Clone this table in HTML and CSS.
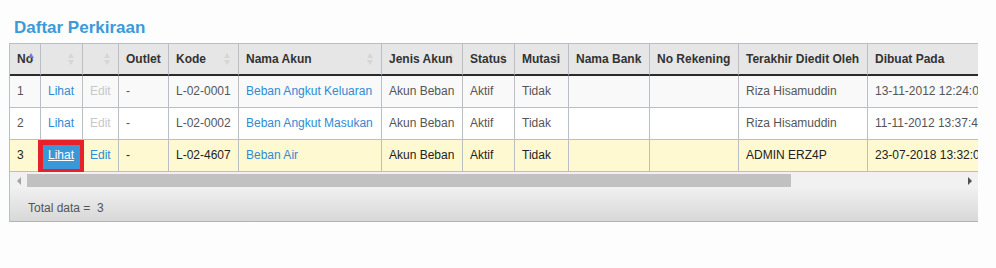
FILE: index.html
```html
<!DOCTYPE html>
<html lang="id">
<head>
<meta charset="utf-8">
<title>Daftar Perkiraan</title>
<link rel="stylesheet" href="styles.css">
</head>
<body>
<div class="page">
  <h2 class="title">Daftar Perkiraan</h2>
  <div class="grid">
    <div class="clip">
      <table class="tbl">
        <colgroup>
          <col class="c1"><col class="c2"><col class="c3"><col class="c4"><col class="c5"><col class="c6"><col class="c7"><col class="c8"><col class="c9"><col class="c10"><col class="c11"><col class="c12"><col class="c13">
        </colgroup>
        <thead>
          <tr>
            <th class="sort asc"><span class="t">No</span></th>
            <th class="sort"></th>
            <th class="sort"></th>
            <th class="sort"><span class="t">Outlet</span></th>
            <th class="sort"><span class="t">Kode</span></th>
            <th class="sort"><span class="t">Nama Akun</span></th>
            <th class="sort"><span class="t">Jenis Akun</span></th>
            <th class="sort"><span class="t">Status</span></th>
            <th class="sort"><span class="t">Mutasi</span></th>
            <th class="sort"><span class="t">Nama Bank</span></th>
            <th class="sort"><span class="t">No Rekening</span></th>
            <th><span class="t">Terakhir Diedit Oleh</span></th>
            <th><span class="t">Dibuat Pada</span></th>
          </tr>
        </thead>
        <tbody>
          <tr class="odd">
            <td>1</td>
            <td><a class="lnk">Lihat</a></td>
            <td><span class="dis">Edit</span></td>
            <td>-</td>
            <td>L-02-0001</td>
            <td><a class="lnk">Beban Angkut Keluaran</a></td>
            <td>Akun Beban</td>
            <td>Aktif</td>
            <td>Tidak</td>
            <td></td>
            <td></td>
            <td>Riza Hisamuddin</td>
            <td>13-11-2012 12:24:05</td>
          </tr>
          <tr class="even">
            <td>2</td>
            <td><a class="lnk">Lihat</a></td>
            <td><span class="dis">Edit</span></td>
            <td>-</td>
            <td>L-02-0002</td>
            <td><a class="lnk">Beban Angkut Masukan</a></td>
            <td>Akun Beban</td>
            <td>Aktif</td>
            <td>Tidak</td>
            <td></td>
            <td></td>
            <td>Riza Hisamuddin</td>
            <td>11-11-2012 13:37:41</td>
          </tr>
          <tr class="sel">
            <td>3</td>
            <td class="active"><a class="lnk on">Lihat</a><span class="mark"></span></td>
            <td><a class="lnk">Edit</a></td>
            <td>-</td>
            <td>L-02-4607</td>
            <td><a class="lnk">Beban Air</a></td>
            <td>Akun Beban</td>
            <td>Aktif</td>
            <td>Tidak</td>
            <td></td>
            <td></td>
            <td>ADMIN ERZ4P</td>
            <td>23-07-2018 13:32:09</td>
          </tr>
        </tbody>
      </table>
    </div>
    <div class="hscroll">
      <div class="btn left"><span class="arr-l"></span></div>
      <div class="track"><div class="thumb"></div></div>
      <div class="btn right"><span class="arr-r"></span></div>
    </div>
    <div class="foot">Total data =&nbsp; 3</div>
  </div>
</div>
</body>
</html>
```
FILE: styles.css
```css
html, body {
  margin: 0;
  padding: 0;
  background: #fdfdfd;
}
body {
  font-family: "Liberation Sans", Arial, sans-serif;
  font-size: 12px;
  color: #555;
}
.page {
  padding: 18px 18px 0 9px;
  width: 969px;
}
.title {
  margin: 0 0 5px 5px;
  font-size: 17px;
  line-height: 20px;
  font-weight: bold;
  color: #3b9ad9;
}
.grid {
  width: 968px;
  border-left: 1px solid #b9bfc5;
}
.clip {
  overflow: hidden;
  width: 968px;
}
.tbl {
  border-collapse: separate;
  border-spacing: 0;
  table-layout: fixed;
  width: 1000px;
}
.c1 { width: 30px; }
.c2 { width: 42px; }
.c3 { width: 36px; }
.c4 { width: 50px; }
.c5 { width: 70px; }
.c6 { width: 143px; }
.c7 { width: 81px; }
.c8 { width: 52px; }
.c9 { width: 54px; }
.c10 { width: 81px; }
.c11 { width: 89px; }
.c12 { width: 129px; }
.c13 { width: 143px; }
.tbl th, .tbl td {
  box-sizing: border-box;
  padding: 0 6px 0 7px;
  text-align: left;
  white-space: nowrap;
  overflow: hidden;
  border-left: 1px solid #b9bfc5;
  line-height: 15px;
}
.tbl th:first-child, .tbl td:first-child {
  border-left: none;
}
.tbl th {
  position: relative;
  height: 33px;
  background: #e6e6e6;
  color: #333;
  font-weight: bold;
  border-top: 1px solid #b9bfc5;
  border-bottom: 2px solid #2b2b2b;
  padding-top: 1px;
}
.t {
  position: relative;
  z-index: 1;
}
.tbl td {
  height: 32px;
  border-bottom: 1px solid #b9bfc5;
}
.sort::before, .sort::after {
  content: "";
  position: absolute;
  right: 8px;
  width: 0;
  height: 0;
  border-left: 3px solid transparent;
  border-right: 3px solid transparent;
}
.sort::before {
  top: 9px;
  border-bottom: 5px solid #d6d6d6;
}
.sort::after {
  top: 16px;
  border-top: 5px solid #d6d6d6;
}
.asc::before {
  right: 6px;
  z-index: 2;
  border-bottom-color: #6a7cd8;
}
.asc::after {
  right: 6px;
}
.odd td { background: #f9f9f9; }
.even td { background: #ffffff; }
.sel td { background: #fff9d2; color: #222; }
.lnk {
  color: #2e8bd5;
  text-decoration: none;
}
.dis {
  color: #c8c8c8;
}
.sel td.active {
  position: relative;
  overflow: visible;
  background: #3a98d8;
}
.lnk.on {
  color: #fff;
  text-decoration: underline;
}
.mark {
  position: absolute;
  left: -3px;
  top: 0;
  width: 46px;
  height: 33px;
  box-sizing: border-box;
  border-style: solid;
  border-color: #e8202a;
  border-width: 5px 4px 4px 5px;
}
.hscroll {
  display: flex;
  height: 17px;
  background: #f1f1f1;
}
.btn {
  width: 17px;
  display: flex;
  align-items: center;
  justify-content: center;
}
.track {
  flex: 1;
  display: flex;
  align-items: center;
}
.thumb {
  width: 764px;
  height: 13px;
  background: #c1c1c1;
}
.arr-l {
  width: 0;
  height: 0;
  border-top: 4px solid transparent;
  border-bottom: 4px solid transparent;
  border-right: 4px solid #a3a3a3;
}
.arr-r {
  width: 0;
  height: 0;
  border-top: 4px solid transparent;
  border-bottom: 4px solid transparent;
  border-left: 4px solid #505050;
}
.foot {
  height: 33px;
  box-sizing: border-box;
  padding: 12px 0 0 18px;
  line-height: 15px;
  background: linear-gradient(#efefef, #d8d8d8);
  border-bottom: 1px solid #b3b3b3;
  color: #555;
}
```
